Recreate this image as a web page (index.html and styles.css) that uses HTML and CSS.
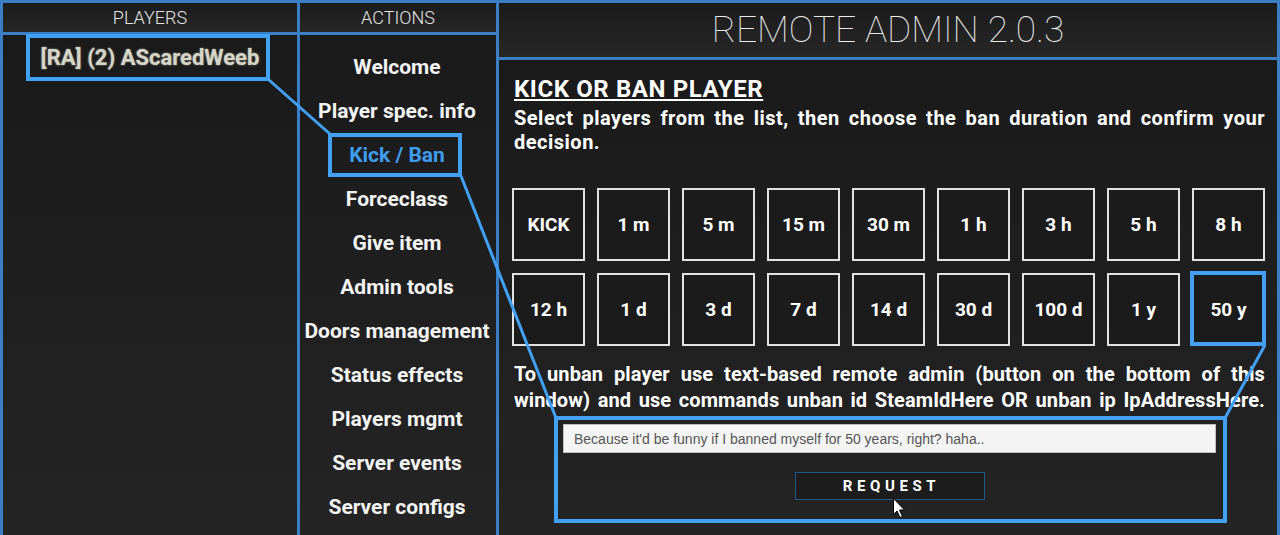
FILE: index.html
```html
<!DOCTYPE html>
<html lang="en">
<head>
<meta charset="utf-8">
<title>Remote Admin 2.0.3</title>
<link rel="stylesheet" href="styles.css">
</head>
<body>
<div class="app">
  <section class="col col-players">
    <header class="head head-small">PLAYERS</header>
    <div class="body players-body">
      <div class="player">[RA] (2) AScaredWeeb</div>
    </div>
  </section>
  <section class="col col-actions">
    <header class="head head-small">ACTIONS</header>
    <nav class="body actions-body">
      <div class="action">Welcome</div>
      <div class="action">Player spec. info</div>
      <div class="action action-active">Kick / Ban</div>
      <div class="action">Forceclass</div>
      <div class="action">Give item</div>
      <div class="action">Admin tools</div>
      <div class="action">Doors management</div>
      <div class="action">Status effects</div>
      <div class="action">Players mgmt</div>
      <div class="action">Server events</div>
      <div class="action">Server configs</div>
    </nav>
  </section>
  <section class="col col-main">
    <header class="head head-main">REMOTE ADMIN 2.0.3</header>
    <div class="body main-body">
      <h1 class="title">KICK OR BAN PLAYER</h1>
      <p class="desc">Select players from the list, then choose the ban duration and confirm your decision.</p>
      <div class="durations">
        <div class="dur">KICK</div>
        <div class="dur">1 m</div>
        <div class="dur">5 m</div>
        <div class="dur">15 m</div>
        <div class="dur">30 m</div>
        <div class="dur">1 h</div>
        <div class="dur">3 h</div>
        <div class="dur">5 h</div>
        <div class="dur">8 h</div>
        <div class="dur">12 h</div>
        <div class="dur">1 d</div>
        <div class="dur">3 d</div>
        <div class="dur">7 d</div>
        <div class="dur">14 d</div>
        <div class="dur">30 d</div>
        <div class="dur">100 d</div>
        <div class="dur">1 y</div>
        <div class="dur">50 y</div>
      </div>
      <p class="desc desc-unban">To unban player use text-based remote admin (button on the bottom of this window) and use commands unban id SteamIdHere OR unban ip IpAddressHere.</p>
      <input class="reason" type="text" value="Because it'd be funny if I banned myself for 50 years, right? haha..">
      <button class="request">REQUEST</button>
    </div>
  </section>
</div>

<svg class="annot" width="1280" height="535" viewBox="0 0 1280 535" aria-hidden="true">
  <g fill="none" stroke="#42a1f5" stroke-width="4">
    <rect x="28" y="36" width="240" height="43"/>
    <rect x="330" y="135" width="130" height="40"/>
    <rect x="1192" y="273" width="72" height="71"/>
    <rect x="556" y="418" width="669" height="103"/>
  </g>
  <g stroke="#42a1f5" stroke-width="3">
    <line x1="269" y1="80" x2="330" y2="134"/>
    <line x1="461" y1="176" x2="556" y2="418"/>
    <line x1="1265" y1="345" x2="1225" y2="418"/>
  </g>
  <path d="M893.5 498.5 L893.5 514.5 L897 511 L900 517.5 L902.5 516.5 L899.5 510 L904.5 510 Z" fill="#fff" stroke="#000" stroke-width="1"/>
</svg>
</body>
</html>
```

FILE: styles.css
```css
* { box-sizing: border-box; }

html, body {
  margin: 0;
  width: 1280px;
  height: 535px;
  overflow: hidden;
}

body {
  background: #3a7fc6;
  font-family: Roboto, "Noto Sans", "DejaVu Sans", sans-serif;
  position: relative;
}

.app {
  display: grid;
  grid-template-columns: 294px 196px 778px;
  column-gap: 3px;
  padding: 3px 3px 0 3px;
  height: 535px;
}

.col {
  display: flex;
  flex-direction: column;
  gap: 3px;
  min-height: 0;
}

.head {
  background: linear-gradient(180deg, #1b1b1b, #272727);
  color: #e4e4e4;
  text-align: center;
  font-weight: 300;
  flex: none;
}

.head-small {
  height: 29px;
  font-size: 18px;
  line-height: 29px;
}

.head-main {
  height: 54px;
  font-size: 37px;
  line-height: 54px;
  font-weight: 100;
  color: #ececec;
}

.body {
  flex: 1;
  background: linear-gradient(180deg, #1a1a1a, #242424);
}

.players-body {
  padding-top: 9px;
}

.player {
  text-align: center;
  font-size: 22px;
  line-height: 28px;
  font-weight: 700;
  color: #d6d6c8;
  text-shadow: 0 0 2px rgba(210, 210, 190, 0.7);
}

.actions-body {
  padding-top: 10px;
}

.action {
  text-align: center;
  font-size: 21px;
  line-height: 44px;
  font-weight: 700;
  color: #f4f4f4;
  white-space: nowrap;
  padding-right: 2px;
}

.action-active {
  color: #3f9df0;
}

.main-body {
  padding: 15px 12px 0 15px;
  color: #fff;
}

.title {
  margin: 0;
  font-size: 24px;
  line-height: 28px;
  font-weight: 700;
  letter-spacing: 0.6px;
  text-decoration: underline;
  text-decoration-thickness: 2px;
  text-underline-offset: 2px;
}

.desc {
  margin: 3px 0 0;
  font-size: 20px;
  line-height: 24px;
  font-weight: 700;
  letter-spacing: 0.5px;
  text-align: justify;
}

.durations {
  margin: 34px 0 0 -2px;
  display: grid;
  grid-template-columns: repeat(9, 73px);
  grid-auto-rows: 73px;
  column-gap: 12px;
  row-gap: 12px;
}

.dur {
  border: 2px solid #e2e2e2;
  background: #1b1b1b;
  display: flex;
  align-items: center;
  justify-content: center;
  font-size: 19px;
  font-weight: 700;
  color: #fff;
}

.desc-unban {
  margin-top: 15px;
  line-height: 26px;
  letter-spacing: 0.1px;
  text-align-last: justify;
}

.reason {
  display: block;
  margin: 11px auto 0;
  width: 653px;
  height: 29px;
  padding: 0 10px;
  border: 1px solid #bdbdbd;
  background: #f4f4f4;
  font-family: "Liberation Sans", Arial, sans-serif;
  font-size: 14px;
  color: #555;
  outline: none;
}

.request {
  display: block;
  margin: 19px auto 0;
  width: 190px;
  height: 28px;
  border: 1px solid #24588c;
  background: #1c1c1c;
  color: #fff;
  font-family: Roboto, sans-serif;
  font-size: 15px;
  font-weight: 700;
  letter-spacing: 4.6px;
  padding: 0 0 0 4px;
}

.annot {
  position: absolute;
  left: 0;
  top: 0;
  pointer-events: none;
}
```
